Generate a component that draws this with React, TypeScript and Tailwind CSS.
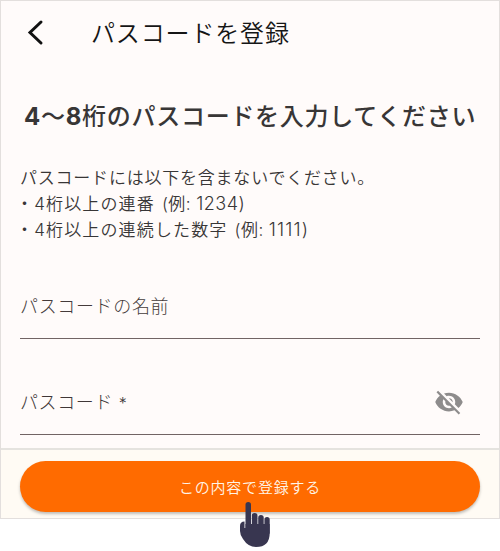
import React from "react";

const notes = [
  { text: "・4桁以上の連番", label: "(例:", sample: "1234)", style: "tracking-[0.5px]" },
  { text: "・4桁以上の連続した数字", label: "(例:", sample: "1111)", style: "tracking-[1.2px]" },
];

function BackIcon() {
  return (
    <svg className="h-7 w-5" viewBox="0 0 20 28" fill="none" stroke="#111111" strokeWidth="3" strokeLinecap="round">
      <path d="M15 3 L4 13.500 L15 24" />
    </svg>
  );
}

function EyeOffIcon() {
  return (
    <svg className="mt-[2px] h-[30px] w-[30px]" viewBox="0 0 24 24" fill="#8e8c8c">
      <path d="M12 7c2.76 0 5 2.24 5 5 0 .65-.13 1.26-.36 1.83l2.92 2.92c1.51-1.26 2.7-2.89 3.43-4.75-1.73-4.39-6-7.5-11-7.5-1.4 0-2.74.25-3.98.7l2.16 2.16C10.74 7.13 11.35 7 12 7zM2 4.27l2.28 2.28.46.46C3.08 8.3 1.78 10.02 1 12c1.73 4.39 6 7.5 11 7.5 1.55 0 3.03-.3 4.38-.84l.42.42L19.73 22 21 20.73 3.27 3 2 4.27zM7.53 9.8l1.55 1.55c-.05.21-.08.43-.08.65 0 1.66 1.34 3 3 3 .22 0 .44-.03.65-.08l1.55 1.55c-.67.33-1.41.53-2.2.53-2.76 0-5-2.24-5-5 0-.79.2-1.53.53-2.2zm4.31-.78l3.15 3.15.02-.16c0-1.66-1.34-3-3-3l-.17.01z" />
    </svg>
  );
}

function HandIcon() {
  return (
    <svg className="h-[46px] w-[31px]" viewBox="0 0 31 46" fill="#383650">
      {/* Index finger and the three folded ones */}
      <rect x="5.500" y="1" width="5.500" height="32" rx="2.750" />
      <rect x="11.800" y="12" width="5.700" height="22" rx="2.850" />
      <rect x="18.200" y="14" width="5.500" height="20" rx="2.750" />
      <rect x="24.400" y="16" width="5.300" height="18" rx="2.650" />
      {/* Palm and thumb */}
      <path d="M0 25 Q0 20.500 4.500 20.500 L4.500 27 L5.500 27 L5.500 23 L29.700 23 L29.700 32 Q29.700 46 16 46 Q8 46 3 38 Q0 34 0 30 Z" />
    </svg>
  );
}

export default function App() {
  return (
    <main className="relative h-[551px] w-[500px] overflow-hidden bg-white font-['Inter','Noto_Sans_CJK_JP',sans-serif] text-[#383636]">
      <div className="flex h-[519px] flex-col border border-[#e3dfdd] bg-[#fffbfa]">
        {/* Header */}
        <header className="flex h-16 items-center pl-[25px] text-[#151515]">
          <BackIcon />
          <h1 className="ml-[45px] mt-[2px] text-2xl font-[350] leading-none tracking-[0.85px]">パスコードを登録</h1>
        </header>

        {/* Instructions */}
        <h2 className="mt-[36px] whitespace-nowrap pl-[23px] text-[24px] font-medium leading-8 tracking-[0.72px]">
          <span className="font-bold">4</span>〜<span className="font-bold">8</span>
          桁のパスコードを入力してください
        </h2>
        <div className="mt-[32px] pl-[19px] text-[17px] font-[350] leading-[26px]">
          <p className="tracking-[0.78px]">パスコードには以下を含まないでください。</p>
          {notes.map((note) => (
            <p key={note.text} className="-ml-[4px] flex tracking-[1.15px]">
              {note.text}
              <span className="ml-[7px] tracking-[0.5px]">{note.label}</span>
              <span className={`ml-[5px] text-[18px] ${note.style}`}>{note.sample}</span>
            </p>
          ))}
        </div>

        {/* Fields */}
        <div className="mx-[19px] mt-[45.500px] h-[50px] border-b border-[#716464] pt-[4px] text-lg font-light leading-7 tracking-[0.65px] text-[#453b3b]">
          パスコードの名前
        </div>
        <div className="mx-[19px] mt-[46px] flex h-[50px] justify-between border-b border-[#716464] pr-4 text-lg font-light leading-7 tracking-[0.6px] text-[#403737]">
          <span className="pt-[4px]">
            パスコード <span className="text-base">*</span>
          </span>
          <EyeOffIcon />
        </div>

        {/* Submit */}
        <footer className="mt-auto h-[70px] border-t-2 border-[#e5e3df] bg-[#fffbf4] px-[19px] pt-[11px]">
          <button className="block h-[51px] w-full rounded-full bg-[#ff6b00] pt-[3px] text-[15px] font-[350] tracking-[0.8px] text-[#fff5e8] shadow-[0_2px_3px_rgba(0,0,0,0.25)]">
            この内容で登録する
          </button>
        </footer>
      </div>

      {/* Tap pointer over the button */}
      <div className="absolute left-[240px] top-[501px]">
        <HandIcon />
      </div>
    </main>
  );
}
